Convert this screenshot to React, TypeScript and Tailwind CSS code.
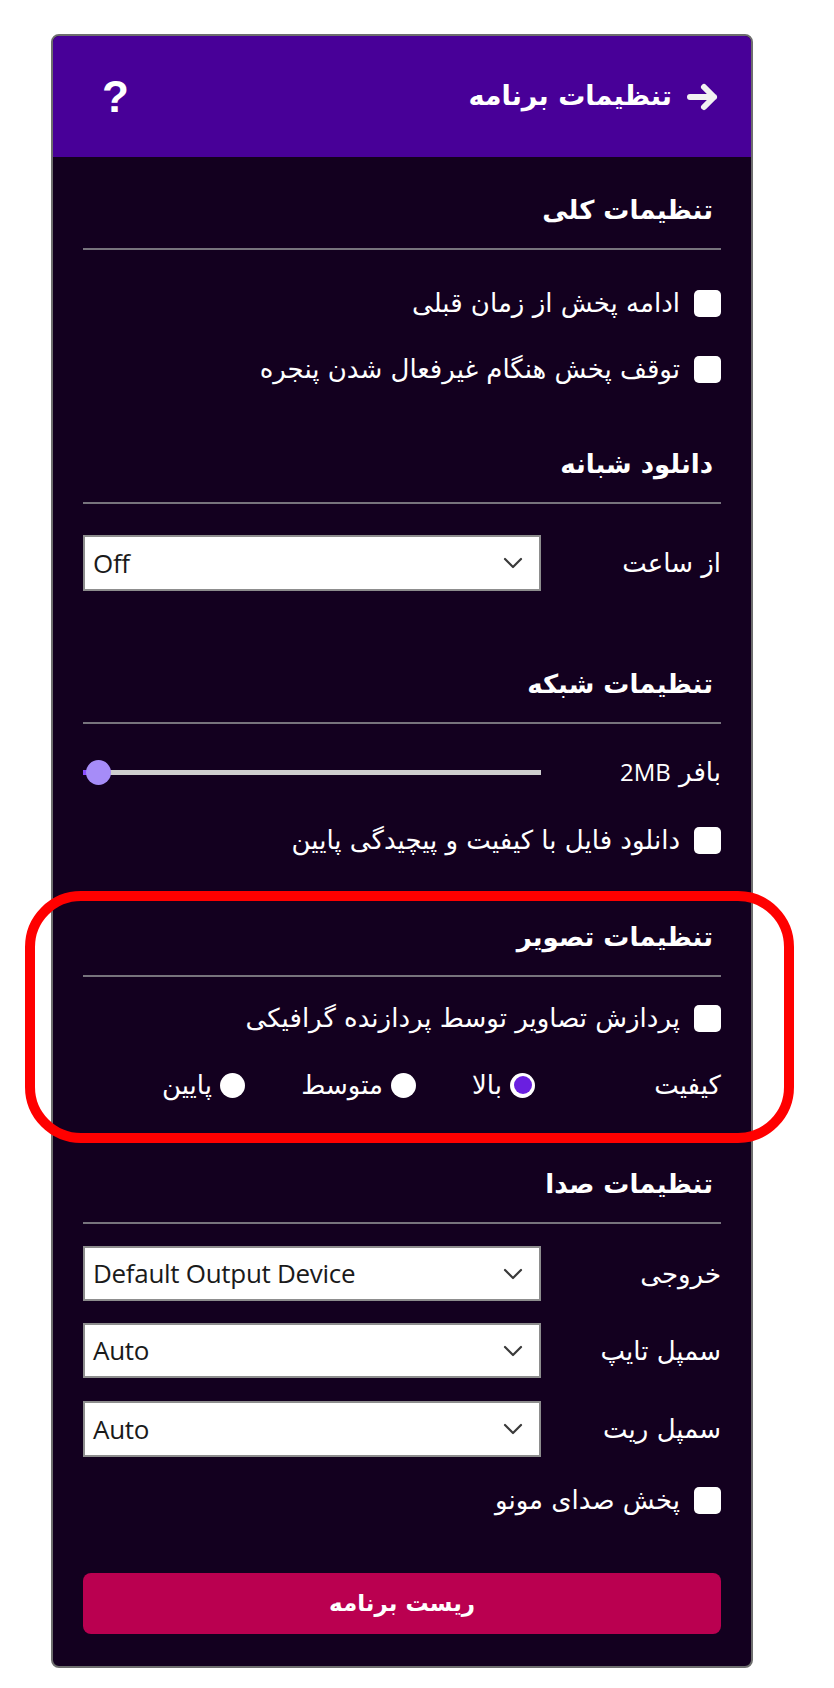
import React from "react";

const FA = '"DejaVu Sans", sans-serif';
const LAT = '"Open Sans", "DejaVu Sans", sans-serif';

function Heading({ children, mt }: { children: React.ReactNode; mt: string }) {
  return (
    <div className={mt}>
      <div className="h-[36px] leading-[36px] text-[26px] font-bold text-white pr-[8px] whitespace-nowrap">{children}</div>
      <div className="mt-[20px] h-[2px] bg-[#77737c]" />
    </div>
  );
}

function Check({ label, mt }: { label: string; mt: string }) {
  return (
    <div className={`${mt} h-[40px] flex items-center gap-[14px]`}>
      <div className="w-[27px] h-[27px] rounded-[5px] bg-white shrink-0" />
      <span className="text-[26px] leading-[40px] text-white whitespace-nowrap">{label}</span>
    </div>
  );
}

function Select({ label, value, mt, h }: { label: string; value: string; mt: string; h: string }) {
  return (
    <div className={`${mt} flex items-center justify-between`}>
      <span className="text-[26px] leading-[40px] text-white whitespace-nowrap">{label}</span>
      <div
        dir="ltr"
        className={`w-[458px] ${h} bg-white border-2 border-[#8d8d8d] flex items-center justify-between pl-[8px] pr-[16px]`}
      >
        <span className="text-[26px] text-[#1a1a1a] tracking-[-0.3px]" style={{ fontFamily: LAT }}>
          {value}
        </span>
        <svg width="20" height="12" viewBox="0 0 20 12" fill="none">
          <path d="M2 2 L10 10 L18 2" stroke="#3a3a3a" strokeWidth="2.2" strokeLinecap="round" strokeLinejoin="round" />
        </svg>
      </div>
    </div>
  );
}

function Radio({ label, checked, w }: { label: string; checked?: boolean; w: string }) {
  return (
    <div className={`${w} flex items-center gap-[8px]`}>
      {checked ? (
        <div className="w-[25px] h-[25px] rounded-full bg-white flex items-center justify-center shrink-0">
          <div className="w-[18px] h-[18px] rounded-full bg-[#6a1fe0]" />
        </div>
      ) : (
        <div className="w-[25px] h-[25px] rounded-full bg-white shrink-0" />
      )}
      <span className="text-[26px] leading-[40px] text-white whitespace-nowrap">{label}</span>
    </div>
  );
}

export default function App() {
  return (
    <div className="relative w-[834px] min-h-[1688px] bg-white" style={{ fontFamily: FA }}>
      <div className="pt-[34px] pl-[51px]">
        <div dir="rtl" className="w-[702px] border-2 border-[#6e6e6e] rounded-[8px] overflow-hidden bg-[#13001f]">
          <div className="h-[121px] bg-[#480098] flex items-center justify-between pr-[31px] pl-[49px]">
            <div className="flex items-center gap-[14px]">
              <svg width="34" height="30" viewBox="0 0 34 30">
                <path
                  d="M4 15 H28 M18 5 L28 15 L18 25"
                  stroke="#f2f2f2"
                  strokeWidth="6"
                  fill="none"
                  strokeLinecap="round"
                  strokeLinejoin="round"
                />
              </svg>
              <span className="text-[27px] font-bold text-white whitespace-nowrap">تنظیمات برنامه</span>
            </div>
            <span className="text-[44px] font-bold text-white leading-none" style={{ fontFamily: '"Liberation Sans", sans-serif' }}>
              ?
            </span>
          </div>

          <div className="px-[30px] pt-[35px] pb-[32px] flex flex-col">
            <Heading mt="mt-0">تنظیمات کلی</Heading>
            <Check mt="mt-[33px]" label="ادامه پخش از زمان قبلی" />
            <Check mt="mt-[26px]" label="توقف پخش هنگام غیرفعال شدن پنجره" />

            <Heading mt="mt-[57px]">دانلود شبانه</Heading>
            <Select mt="mt-[31px]" h="h-[56px]" label="از ساعت" value="Off" />

            <Heading mt="mt-[75px]">تنظیمات شبکه</Heading>
            <div className="mt-[28px] h-[40px] flex items-center justify-between">
              <span className="text-[26px] leading-[40px] text-white whitespace-nowrap">
                بافر <span style={{ fontFamily: LAT }} className="text-[24px]">2MB</span>
              </span>
              <div className="relative w-[458px] h-[25px]" dir="ltr">
                <div className="absolute left-0 right-0 top-[10px] h-[5px] bg-[#cfcfcf]" />
                <div className="absolute left-0 w-[6px] top-[10px] h-[5px] bg-[#8a4dff]" />
                <div className="absolute left-[3px] top-0 w-[25px] h-[25px] rounded-full bg-[#a68cf8]" />
              </div>
            </div>
            <Check mt="mt-[28px]" label="دانلود فایل با کیفیت و پیچیدگی پایین" />

            <Heading mt="mt-[59px]">تنظیمات تصویر</Heading>
            <Check mt="mt-[21px]" label="پردازش تصاویر توسط پردازنده گرافیکی" />
            <div className="mt-[27px] h-[40px] flex items-center">
              <span className="w-[186px] text-[26px] leading-[40px] text-white">کیفیت</span>
              <Radio w="w-[119px]" checked label="بالا" />
              <Radio w="w-[171px]" label="متوسط" />
              <Radio w="w-auto" label="پایین" />
            </div>

            <Heading mt="mt-[61px]">تنظیمات صدا</Heading>
            <Select mt="mt-[22px]" h="h-[55px]" label="خروجی" value="Default Output Device" />
            <Select mt="mt-[22px]" h="h-[55px]" label="سمپل تایپ" value="Auto" />
            <Select mt="mt-[23px]" h="h-[56px]" label="سمپل ریت" value="Auto" />
            <Check mt="mt-[23px]" label="پخش صدای مونو" />

            <button className="mt-[53px] h-[61px] w-full rounded-[8px] bg-[#ba0050] text-white text-[23px] font-bold">
              ریست برنامه
            </button>
          </div>
        </div>
      </div>

      <div className="absolute left-[25px] top-[891px] w-[769px] h-[252px] border-[10px] border-[#ff0000] rounded-[56px] pointer-events-none" />
    </div>
  );
}
